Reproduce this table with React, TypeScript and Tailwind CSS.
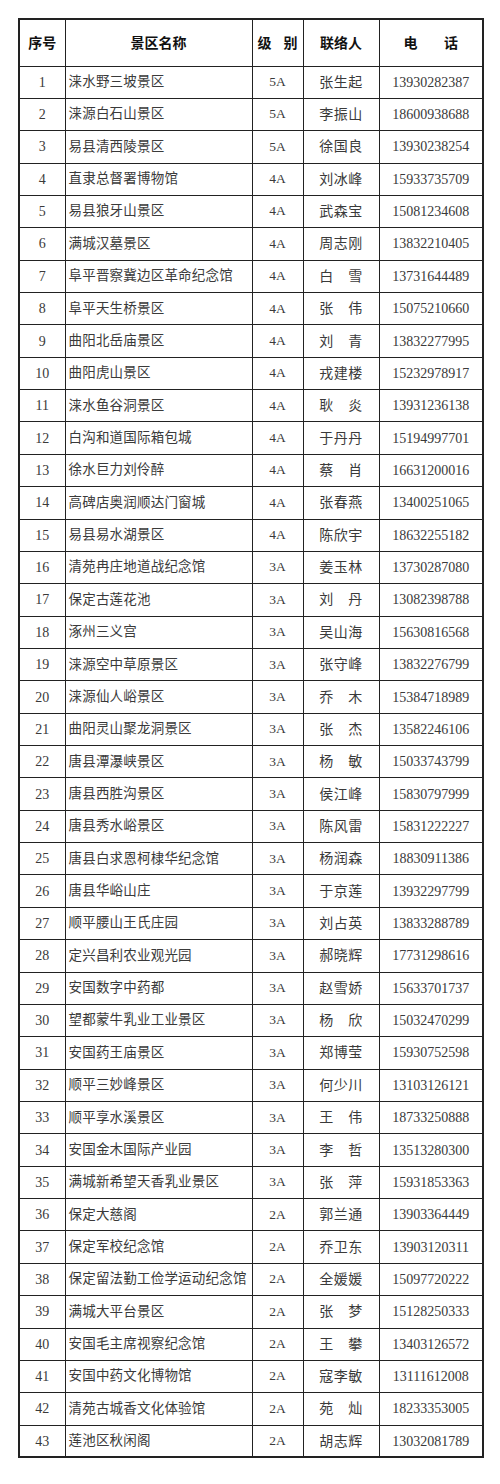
const rows: [string, string, string, string][] = [
  ["涞水野三坡景区", "5A", "张生起", "13930282387"],
  ["涞源白石山景区", "5A", "李振山", "18600938688"],
  ["易县清西陵景区", "5A", "徐国良", "13930238254"],
  ["直隶总督署博物馆", "4A", "刘冰峰", "15933735709"],
  ["易县狼牙山景区", "4A", "武森宝", "15081234608"],
  ["满城汉墓景区", "4A", "周志刚", "13832210405"],
  ["阜平晋察冀边区革命纪念馆", "4A", "白　雪", "13731644489"],
  ["阜平天生桥景区", "4A", "张　伟", "15075210660"],
  ["曲阳北岳庙景区", "4A", "刘　青", "13832277995"],
  ["曲阳虎山景区", "4A", "戎建楼", "15232978917"],
  ["涞水鱼谷洞景区", "4A", "耿　炎", "13931236138"],
  ["白沟和道国际箱包城", "4A", "于丹丹", "15194997701"],
  ["徐水巨力刘伶醉", "4A", "蔡　肖", "16631200016"],
  ["高碑店奥润顺达门窗城", "4A", "张春燕", "13400251065"],
  ["易县易水湖景区", "4A", "陈欣宇", "18632255182"],
  ["清苑冉庄地道战纪念馆", "3A", "姜玉林", "13730287080"],
  ["保定古莲花池", "3A", "刘　丹", "13082398788"],
  ["涿州三义宫", "3A", "吴山海", "15630816568"],
  ["涞源空中草原景区", "3A", "张守峰", "13832276799"],
  ["涞源仙人峪景区", "3A", "乔　木", "15384718989"],
  ["曲阳灵山聚龙洞景区", "3A", "张　杰", "13582246106"],
  ["唐县潭瀑峡景区", "3A", "杨　敏", "15033743799"],
  ["唐县西胜沟景区", "3A", "侯江峰", "15830797999"],
  ["唐县秀水峪景区", "3A", "陈风雷", "15831222227"],
  ["唐县白求恩柯棣华纪念馆", "3A", "杨润森", "18830911386"],
  ["唐县华峪山庄", "3A", "于京莲", "13932297799"],
  ["顺平腰山王氏庄园", "3A", "刘占英", "13833288789"],
  ["定兴昌利农业观光园", "3A", "郝晓辉", "17731298616"],
  ["安国数字中药都", "3A", "赵雪娇", "15633701737"],
  ["望都蒙牛乳业工业景区", "3A", "杨　欣", "15032470299"],
  ["安国药王庙景区", "3A", "郑博莹", "15930752598"],
  ["顺平三妙峰景区", "3A", "何少川", "13103126121"],
  ["顺平享水溪景区", "3A", "王　伟", "18733250888"],
  ["安国金木国际产业园", "3A", "李　哲", "13513280300"],
  ["满城新希望天香乳业景区", "3A", "张　萍", "15931853363"],
  ["保定大慈阁", "2A", "郭兰通", "13903364449"],
  ["保定军校纪念馆", "2A", "乔卫东", "13903120311"],
  ["保定留法勤工俭学运动纪念馆", "2A", "全媛媛", "15097720222"],
  ["满城大平台景区", "2A", "张　梦", "15128250333"],
  ["安国毛主席视察纪念馆", "2A", "王　攀", "13403126572"],
  ["安国中药文化博物馆", "2A", "寇李敏", "13111612008"],
  ["清苑古城香文化体验馆", "2A", "苑　灿", "18233353005"],
  ["莲池区秋闲阁", "2A", "胡志辉", "13032081789"],
];

const cell = "border-[1.5px] border-[#222]";

const App = () => {
  return (
    <div className="w-[500px] h-[1484px] bg-white pt-[18px] pl-[18px] font-['Liberation_Serif','Noto_Sans_CJK_SC',serif]">
      <table className="w-[464px] table-fixed border-collapse border-2 border-[#222]">
        <colgroup>
          <col className="w-[46px]" />
          <col className="w-[187px]" />
          <col className="w-[51px]" />
          <col className="w-[76px]" />
          <col className="w-[104px]" />
        </colgroup>
        <thead>
          <tr className="h-[47px] font-['Noto_Sans_CJK_SC',sans-serif] font-bold text-[14px] text-[#111]">
            <th className={`${cell} text-center`}>序号</th>
            <th className={`${cell} text-center`}>景区名称</th>
            <th className={`${cell} text-center`}>
              <div className="flex justify-between px-[5px]">
                <span>级</span>
                <span>别</span>
              </div>
            </th>
            <th className={`${cell} text-center`}>联络人</th>
            <th className={`${cell} text-center`}>
              <div className="flex justify-between px-[24px]">
                <span>电</span>
                <span>话</span>
              </div>
            </th>
          </tr>
        </thead>
        <tbody>
          {rows.map((r, i) => (
            <tr key={i} className="h-[32.37px] text-[14px] text-[#3a3a3a]">
              <td className={`${cell} text-center`}>{i + 1}</td>
              <td className={`${cell} pl-[3px] text-[13.5px] tracking-[0.2px] whitespace-nowrap overflow-hidden`}>{r[0]}</td>
              <td className={`${cell} text-center text-[13.5px]`}>{r[1]}</td>
              <td className={`${cell} text-center tracking-[0.5px]`}>{r[2]}</td>
              <td className={`${cell} text-center`}>{r[3]}</td>
            </tr>
          ))}
        </tbody>
      </table>
    </div>
  );
};

export default App;
